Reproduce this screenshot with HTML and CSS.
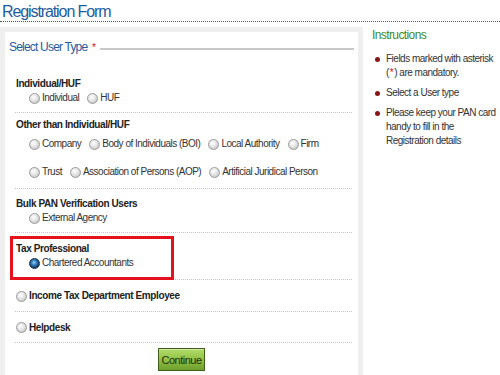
FILE: index.html
```html
<!DOCTYPE html>
<html lang="en">
<head>
  <meta charset="UTF-8" />
  <meta name="viewport" content="width=device-width, initial-scale=1.0"/>
  <title>Registration Form</title>
  <link rel="stylesheet" href="styles.css">
</head>
<body>
  <h1 class="page-title">Registration Form</h1>

  <div class="layout">
    <div class="user-panel">
      <div class="legend">
        <span class="legend-text">Select User Type <span class="req">*</span></span>
        <span class="legend-line"></span>
      </div>

      <div class="group first">
        <div class="group-title">Individual/HUF</div>
        <div class="opt-row">
          <label class="opt"><input type="radio" name="usertype">Individual</label>
          <label class="opt"><input type="radio" name="usertype">HUF</label>
        </div>
      </div>

      <div class="group multi">
        <div class="group-title">Other than Individual/HUF</div>
        <div class="opt-row">
          <label class="opt"><input type="radio" name="usertype">Company</label>
          <label class="opt"><input type="radio" name="usertype">Body of Individuals (BOI)</label>
          <label class="opt"><input type="radio" name="usertype">Local Authority</label>
          <label class="opt"><input type="radio" name="usertype">Firm</label>
        </div>
        <div class="opt-row">
          <label class="opt"><input type="radio" name="usertype">Trust</label>
          <label class="opt"><input type="radio" name="usertype">Association of Persons (AOP)</label>
          <label class="opt"><input type="radio" name="usertype">Artificial Juridical Person</label>
        </div>
      </div>

      <div class="group">
        <div class="group-title">Bulk PAN Verification Users</div>
        <div class="opt-row">
          <label class="opt"><input type="radio" name="usertype">External Agency</label>
        </div>
      </div>

      <div class="group highlight">
        <div class="group-title">Tax Professional</div>
        <div class="opt-row">
          <label class="opt"><input type="radio" name="usertype" checked>Chartered Accountants</label>
        </div>
      </div>

      <div class="group single">
        <label class="opt bold"><input type="radio" name="usertype">Income Tax Department Employee</label>
      </div>

      <div class="group single">
        <label class="opt bold"><input type="radio" name="usertype">Helpdesk</label>
      </div>

      <div class="actions">
        <button class="continue-btn">Continue</button>
      </div>
    </div>

    <div class="instructions">
      <h2>Instructions</h2>
      <ul>
        <li>Fields marked with asterisk (<span class="req">*</span>) are mandatory.</li>
        <li>Select a User type</li>
        <li>Please keep your PAN card handy to fill in the Registration details</li>
      </ul>
    </div>
  </div>
</body>
</html>
```

FILE: styles.css
```css
body {
  font-family: "Liberation Sans", Arial, sans-serif;
  background-color: #fff;
  color: #333;
  margin: 0;
  font-size: 10px;
  letter-spacing: -0.5px;
}

.page-title {
  margin: 0;
  padding: 3px 0 0 2px;
  font-size: 16px;
  line-height: 18px;
  font-weight: normal;
  letter-spacing: -1.1px;
  color: #1d5c9d;
  border-bottom: 1px dotted #555;
}

.layout {
  display: flex;
  align-items: flex-start;
}

.user-panel {
  box-sizing: border-box;
  width: 363px;
  margin-top: 5px;
  border: 5px solid #efefef;
  padding: 7px 0 20px;
}

.legend {
  display: flex;
  align-items: center;
  padding-left: 4px;
  margin-right: 4px;
  margin-bottom: 13px;
}

.legend-text {
  font-size: 12px;
  line-height: 16px;
  letter-spacing: -0.8px;
  color: #1d5c9d;
  margin-right: 5px;
}

.legend-line {
  flex: 1;
  height: 2px;
  background-color: #c8c8c8;
  margin-top: 2px;
}

.req {
  color: #e01010;
}

.legend .req {
  font-size: 10px;
  margin-left: 2px;
}

.instructions .req {
  margin: 0 1px;
}

.group {
  position: relative;
  margin: 0 6px 0 10px;
  padding: 8px 0 7px 1px;
  border-bottom: 1px dotted #c4c4c4;
}

.group.multi {
  padding-top: 5px;
  padding-bottom: 9px;
}

.group.highlight {
  padding-top: 9px;
  padding-bottom: 9px;
}

.group.single {
  padding-top: 9px;
  padding-bottom: 7px;
}

.group.highlight::before {
  content: "";
  position: absolute;
  top: 3px;
  left: -5px;
  width: 164px;
  height: 44px;
  box-sizing: border-box;
  border: 3px solid #e5121e;
}

.group-title {
  font-weight: bold;
  color: #222;
  line-height: 14px;
  letter-spacing: -0.4px;
}

.opt-row {
  display: flex;
  padding-left: 13px;
  line-height: 14px;
  white-space: nowrap;
}

.multi .opt-row {
  margin-top: 5px;
}

.multi .opt-row + .opt-row {
  margin-top: 14px;
}

.opt {
  display: inline-flex;
  align-items: center;
  margin-right: 8px;
  line-height: 14px;
  color: #333;
}

.opt.bold {
  font-weight: bold;
  letter-spacing: -0.4px;
  color: #222;
}

.opt input {
  -webkit-appearance: none;
  appearance: none;
  box-sizing: border-box;
  width: 11px;
  height: 11px;
  margin: 0 2px 0 0;
  border: 1px solid #9a9a9a;
  border-radius: 50%;
  background: radial-gradient(circle at 40% 35%, #ffffff 0, #e4e4e4 45%, #b9b9b9 100%);
}

.opt input:checked {
  border-color: #1f2f45;
  background: radial-gradient(circle at 45% 40%, #9fd0f5 0, #2f7fc0 35%, #173a63 70%, #9fb3c8 100%);
}

.actions {
  display: flex;
  justify-content: center;
  margin-top: 5px;
}

.continue-btn {
  width: 47px;
  height: 23px;
  padding: 0;
  font-family: inherit;
  font-size: 11px;
  letter-spacing: -0.5px;
  color: #1e2e10;
  border: 1px solid #3f5f1b;
  background: linear-gradient(#b4dc6a, #8cbf42 55%, #6f9f2c);
  box-shadow: inset 0 1px 0 rgba(255,255,255,0.4);
}

.instructions {
  flex: 1;
  padding-left: 9px;
}

.instructions h2 {
  margin: 0;
  padding-top: 5px;
  font-size: 12px;
  line-height: 16px;
  font-weight: normal;
  letter-spacing: -0.6px;
  color: #3f8a22;
}

.instructions ul {
  margin: 9px 0 0;
  padding: 0 0 0 14px;
  list-style: none;
}

.instructions li {
  position: relative;
  line-height: 14px;
  margin-bottom: 6px;
  color: #333;
  padding-right: 4px;
}

.instructions li::before {
  content: "";
  position: absolute;
  left: -11px;
  top: 5px;
  width: 5px;
  height: 5px;
  border-radius: 50%;
  background-color: #8a1616;
}
```
